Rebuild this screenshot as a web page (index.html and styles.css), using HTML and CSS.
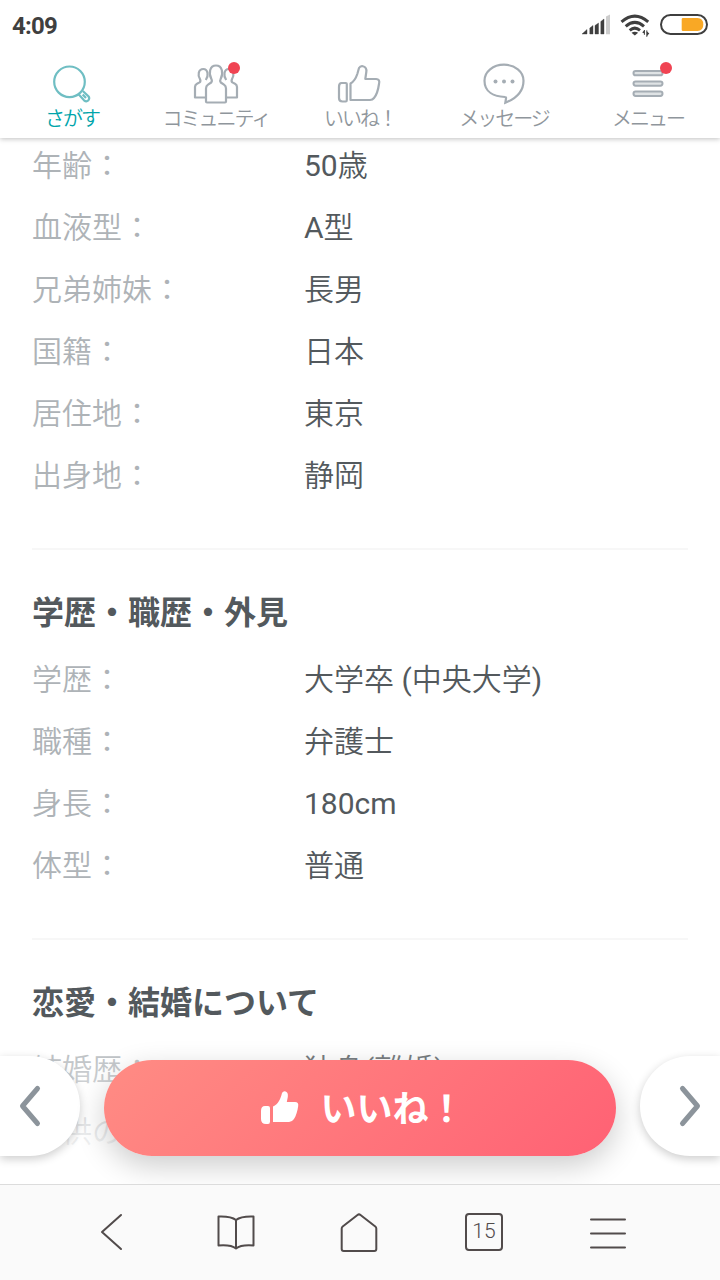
FILE: index.html
```html
<!DOCTYPE html>
<html lang="ja">
<head>
<meta charset="utf-8">
<title>プロフィール</title>
<link rel="stylesheet" href="styles.css">
</head>
<body>
<div class="screen">
  <header class="top">
    <div class="status">
      <span class="clock">4:09</span>
      <svg class="status-icons" width="128" height="26" viewBox="0 0 128 26">
        <path d="M2 22 7 17.500V22zM9.800 16 13 13.500V22H9.800zM15 13.500 18.500 11V22H15zM20.800 9.500 24 7V22H20.800z" fill="#3f3f3f" stroke="#3f3f3f" stroke-width=".4"/>
        <path d="M26 4.500 30 2.500V22.200H26z" fill="#ccc"/>
        <g fill="none" stroke="#3f3f3f" stroke-width="3"><path d="M41.500 9.800Q54.800-1.600 68.200 9.800M45.700 14.300Q54.800 6.500 64 14.300M49.700 18.300Q54.800 14 60 18.300"/></g>
        <path d="M51.500 20.800Q54.800 18.600 58.200 20.800L54.800 23.500z" fill="#3f3f3f"/>
        <path d="M62.200 20.500 64.500 18V21.500zM67 19.500V24L69.300 21.500z" fill="#3f3f3f"/><path d="M64.400 18V22.800M66.800 18.400V24.800" stroke="#3f3f3f"/>
        <rect x="81" y="3" width="46" height="19" rx="9.500" fill="none" stroke="#3f3f3f" stroke-width="2"/>
        <path d="M103 6H117.500Q123.300 6 123.300 12.500T117.500 19H103Q101.700 19 101.700 17.700V7.300Q101.700 6 103 6z" fill="#f9a825"/>
      </svg>
    </div>
    <nav class="tabs">
      <a class="tab tab-active">
        <svg width="48" height="44" viewBox="0 0 48 44"><g fill="none" stroke="#6fbec3" stroke-width="2.200"><circle cx="21.500" cy="20.800" r="15.300"/><path d="M30.800 33.500 36 39.300Q38.400 41.200 40.200 39.500 42 37.500 40.600 35.500L34.800 30M34.700 33.500 38 37"/></g></svg>
        <span class="tab-label">さがす</span>
      </a>
      <a class="tab">
        <svg width="48" height="44" viewBox="0 0 48 44"><g fill="none" stroke="#a5adb4" stroke-width="2.200" stroke-linejoin="round"><path d="M13.500 36.500H3V26Q3 23.800 5 22.800L7.600 21.400Q9 20.300 8 18.200C5.500 14.500 6.200 8 11.300 8 13.500 8 15 9.500 15.500 12Q16.200 15.500 13.800 19M34.500 36.500H45V26Q45 23.800 43 22.800L40.400 21.400Q39 20.300 40 18.200C42.500 14.500 41.800 8 36.700 8 34.500 8 33 9.500 32.500 12Q31.800 15.500 34.200 19"/><path d="M14 40.500V27.500Q14 25 16 23.700L19.200 21.500Q20.500 20 19.300 17.800C16.500 12.500 17.500 4.500 24 4.500S31.500 12.500 28.700 17.800Q27.500 20 28.800 21.500L32 23.700Q34 25 34 27.500V40.500Q34 41.500 33 41.500H15Q14 41.500 14 40.500z"/></g></svg>
        <i class="dot"></i>
        <span class="tab-label">コミュニティ</span>
      </a>
      <a class="tab">
        <svg width="48" height="44" viewBox="0 0 48 44"><g fill="none" stroke="#a5adb4" stroke-width="2.200" stroke-linejoin="round"><path d="M5.500 22H9.800Q10.800 22 10.800 23V39Q10.800 40.500 9.800 40.500H6.500Q3 40.500 3 37V26Q3 22 5.500 22z"/><path d="M14.500 39V22.500Q19 20 21.300 13L23 7Q24.500 4.500 27 5.200 31 6.200 30.300 11L29.300 18H40Q44.300 18.300 43 23C42.300 28 41 33.500 38 37Q36.500 39 34 39z"/></g></svg>
        <span class="tab-label">いいね！</span>
      </a>
      <a class="tab">
        <svg width="48" height="44" viewBox="0 0 48 44"><path d="M24 3.700C13 3.700 4.500 10.700 4.500 19.700 4.500 31 14 35.500 25 36Q26.300 36 26 37.500L25.300 41.800C36 37.500 43.500 30 43.500 19.700 43.500 10.700 35 3.700 24 3.700z" fill="none" stroke="#a5adb4" stroke-width="2.200"/><g fill="#a5adb4"><circle cx="15.500" cy="20.500" r="2"/><circle cx="24" cy="20.500" r="2"/><circle cx="32.500" cy="20.500" r="2"/></g></svg>
        <span class="tab-label">メッセージ</span>
      </a>
      <a class="tab">
        <svg width="48" height="44" viewBox="0 0 48 44"><g fill="#dfe3e5" stroke="#a5adb4" stroke-width="2"><rect x="9.500" y="10" width="29" height="4.300" rx="2.100"/><rect x="9.500" y="20.400" width="29" height="4.300" rx="2.100"/><rect x="9.500" y="30.600" width="29" height="4.300" rx="2.100"/></g></svg>
        <i class="dot"></i>
        <span class="tab-label">メニュー</span>
      </a>
    </nav>
  </header>

  <main class="profile">
    <section class="group">
      <dl class="rows">
        <dt>年齢：</dt><dd><span class="latin">50</span>歳</dd>
        <dt>血液型：</dt><dd><span class="latin">A</span>型</dd>
        <dt>兄弟姉妹：</dt><dd>長男</dd>
        <dt>国籍：</dt><dd>日本</dd>
        <dt>居住地：</dt><dd>東京</dd>
        <dt>出身地：</dt><dd>静岡</dd>
      </dl>
    </section>
    <section class="group">
      <h2>学歴・職歴・外見</h2>
      <dl class="rows">
        <dt>学歴：</dt><dd>大学卒<span class="latin"> (</span>中央大学<span class="latin">)</span></dd>
        <dt>職種：</dt><dd>弁護士</dd>
        <dt>身長：</dt><dd><span class="latin">180cm</span></dd>
        <dt>体型：</dt><dd>普通</dd>
      </dl>
    </section>
    <section class="group">
      <h2>恋愛・結婚について</h2>
      <dl class="rows">
        <dt>結婚歴：</dt><dd>独身<span class="latin">(</span>離婚<span class="latin">)</span></dd>
        <dt>子供の</dt><dd></dd>
      </dl>
    </section>
    <div class="actions">
      <button class="side side-prev"><svg width="24" height="44" viewBox="0 0 24 44"><path d="M19.500 4.500 4.500 22 19.500 39.500"/></svg></button>
      <button class="like">
        <svg width="40" height="36" viewBox="0 0 40 36"><path d="M6 17H9Q11 17 11 19V32.500Q11 35 9 35H7Q2 35 2 30V22Q2 17 6 17zM14 17.500C19.500 15 21.500 10 23 4Q24 2 26 2.200 29.500 3 28.800 8L27.800 13H36Q39.800 13.200 39.200 17C38.500 22 37 27 35 30Q33 33 30 33H14z" fill="#fff"/></svg>
        <span>いいね！</span>
      </button>
      <button class="side side-next"><svg width="24" height="44" viewBox="0 0 24 44"><path d="M4.500 4.500 19.500 22 4.500 39.500"/></svg></button>
    </div>
  </main>

  <footer class="browser-bar">
    <svg width="40" height="40" viewBox="0 0 40 40"><path d="M29 3 10 20 29 37"/></svg>
    <svg width="40" height="40" viewBox="0 0 40 40"><path d="M20 8Q15 4 2.500 4.500V33.500Q15 32.500 20 36.500 25 32.500 37.500 33.500V4.500Q25 4 20 8V36"/></svg>
    <svg width="40" height="40" viewBox="0 0 40 40"><path d="M1.700 16.500Q1.700 15.300 2.700 14.500L17.500 3Q19 1.800 20.500 3L35.300 14.500Q36.300 15.300 36.300 16.500V37Q36.300 39 34.300 39H3.700Q1.700 39 1.700 37z"/></svg>
    <div class="tab-count">15</div>
    <svg width="40" height="40" viewBox="0 0 40 40"><path d="M3 7.500H37M3 21.500H37M3 35.500H37"/></svg>
  </footer>
</div>
</body>
</html>
```
FILE: styles.css
```css
* { box-sizing: border-box; margin: 0; }
body { background: #fff; font-family: Roboto, "Noto Sans CJK JP", sans-serif; color: #53595d; }
svg { display: block; flex: none; }
.screen { width: 720px; height: 1280px; display: grid; grid-template-rows: 138px 1046px 96px; overflow: hidden; }
.top { position: relative; z-index: 2; background: #fff; box-shadow: 0 1px 5px rgba(0, 0, 0, .25); }
.status { height: 50px; display: flex; align-items: center; justify-content: space-between; padding: 2px 12px 0; }
.clock { font-size: 24px; font-weight: 700; color: #3f3f3f; letter-spacing: -.8px; }
.status-icons { margin-top: -3px; }
.tabs { display: grid; grid-template-columns: repeat(5, 144px); height: 88px; padding-top: 11px; }
.tab { position: relative; display: flex; flex-direction: column; align-items: center; }
.tab-label { font-family: "Noto Sans CJK JP", sans-serif; font-size: 20px; line-height: 26px; font-weight: 350; letter-spacing: -2px; white-space: nowrap; color: #8f969c; }
.tab-active .tab-label { color: #00a5ab; }
.dot { position: absolute; left: 84px; top: 1px; width: 12px; height: 12px; border-radius: 50%; background: #f04453; }
.profile { position: relative; overflow: hidden; }
.group { margin: 0 32px; padding: 35px 0 41px; border-bottom: 2px solid #f7f7f7; }
.group:first-child { margin-top: -3px; padding-top: 0; }
.group h2 { height: 64px; line-height: 56px; font-size: 32px; font-weight: 700; }
.rows { display: grid; grid-template-columns: 272px 1fr; grid-auto-rows: 62px; font-size: 30px; line-height: 61px; font-weight: 350; white-space: nowrap; }
.rows dt { color: #aeb3b7; }
.latin { font-weight: 400; white-space: pre; }
.actions { position: absolute; left: 0; right: 0; bottom: 0; height: 130px; display: flex; justify-content: space-between; align-items: flex-start; background: linear-gradient(rgba(255, 255, 255, .2), #fff 90%); }
.actions button { border: 0; padding: 0; font-family: inherit; display: flex; align-items: center; }
.side { width: 80px; height: 100px; margin-top: 2px; background: #fff; box-shadow: 0 3px 10px rgba(0, 0, 0, .2); }
.side path { fill: none; stroke: #8c949b; stroke-width: 5; stroke-linecap: round; stroke-linejoin: round; }
.side-prev { border-radius: 0 50px 50px 0; }
.side-prev svg { margin-left: 18px; }
.side-next { border-radius: 50px 0 0 50px; }
.side-next svg { margin-left: 38px; }
.actions .like { width: 512px; height: 96px; margin-top: 6px; padding: 0 0 5px 4px; border-radius: 48px; justify-content: center; gap: 21px; background: linear-gradient(135deg, #ff8c84, #ff6174); box-shadow: 0 10px 30px rgba(0, 0, 0, .2); color: #fff; font-size: 36px; font-weight: 700; }
.like svg { margin-top: 2px; }
.browser-bar { background: #fafafa; border-top: 1px solid #dcdcdc; display: grid; grid-template-columns: repeat(5, 124px); justify-content: center; justify-items: center; align-items: center; padding-bottom: 1px; }
.browser-bar path { fill: none; stroke: #514b4b; stroke-width: 2; stroke-linecap: round; stroke-linejoin: round; }
.tab-count { width: 38px; height: 38px; border: 2px solid #514b4b; border-radius: 4px; color: #514b4b; font-family: Roboto, sans-serif; font-weight: 300; font-size: 21px; line-height: 32px; text-align: center; }
```
